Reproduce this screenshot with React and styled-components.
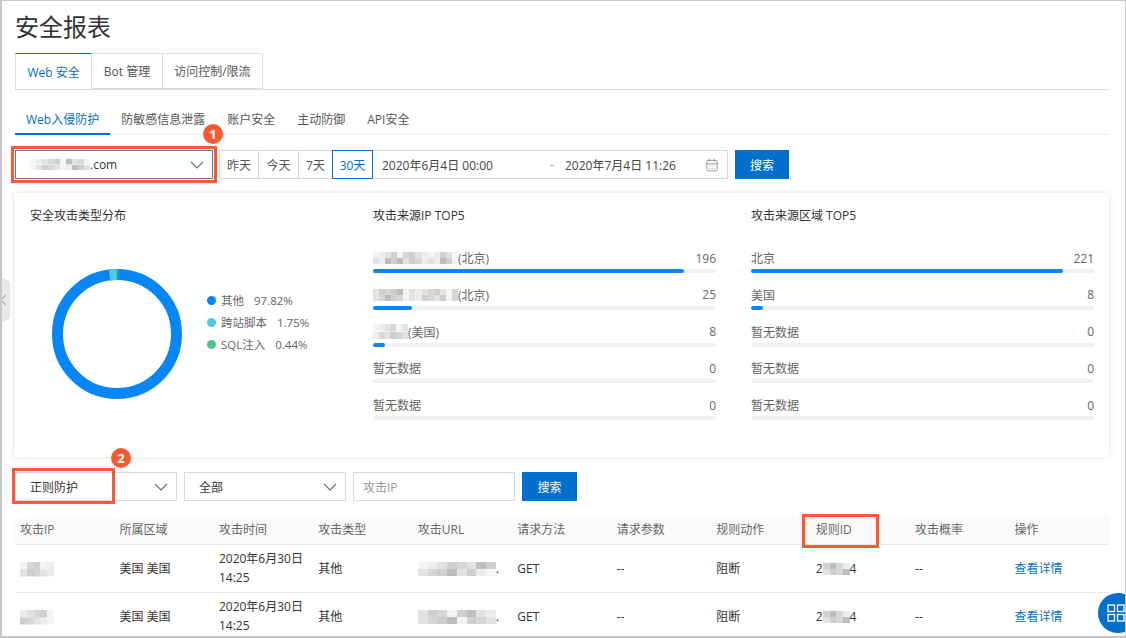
import React from 'react'
import styled, { createGlobalStyle } from 'styled-components'
import { CalendarDays } from 'lucide-react'

const GlobalStyle = createGlobalStyle`
  html, body {
    margin: 0;
    padding: 0;
    background: #ffffff;
  }
  body {
    font-family: "Open Sans", "Noto Sans CJK SC", sans-serif;
    font-size: 12px;
    color: #333333;
  }
  * {
    box-sizing: border-box;
  }
`

const Frame = styled.div`
  position: relative;
  width: 1126px;
  height: 638px;
  overflow: hidden;
  border: 2px solid #c6c6c6;
  border-right-width: 1px;
  border-top-width: 1px;
  padding: 11px 16px 0 13px;
  background: #ffffff;
`

const Title = styled.h1`
  margin: 0;
  height: 30px;
  font-size: 24px;
  line-height: 30px;
  font-weight: 400;
  color: #333333;
`

const TopTabs = styled.div`
  display: flex;
  margin-top: 11px;
  height: 37px;
  border-bottom: 1px solid #dddddd;
`

const TopTab = styled.div`
  height: 36px;
  padding: 0 11.5px;
  display: flex;
  align-items: center;
  border: 1px solid #dddddd;
  border-left-width: ${props => props.$first ? '1px' : '0'};
  border-top: 1px solid ${props => props.$active ? '#0070cc' : '#dddddd'};
  border-bottom: ${props => props.$active ? '0' : '1px solid #dddddd'};
  background: #ffffff;
  color: ${props => props.$active ? '#0070cc' : '#555555'};
`

const SubTabs = styled.div`
  display: flex;
  margin-top: 17px;
  height: 28px;
  border-bottom: 1px solid #ececec;
`

const SubTab = styled.div`
  height: 28px;
  padding: 0 11px;
  line-height: 26px;
  border-bottom: 2px solid ${props => props.$active ? '#0070cc' : 'transparent'};
  color: ${props => props.$active ? '#0070cc' : '#555555'};
`

const FilterRow = styled.div`
  display: flex;
  align-items: stretch;
  height: 29px;
  margin-top: 15px;
`

const SelectBox = styled.div`
  position: relative;
  width: ${props => props.$width}px;
  margin-right: 7px;
  padding: 0 8px 0 14px;
  display: flex;
  align-items: center;
  justify-content: space-between;
  background: #ffffff;
  border: 1px solid ${props => props.$dark ? '#777777' : '#d9d9d9'};
  color: #333333;
`

const Chevron = styled.svg`
  width: 14px;
  height: 8px;
  fill: none;
  stroke: #707070;
  stroke-width: 1.2;
`

const Callout = styled.div`
  position: absolute;
  left: ${props => props.$left}px;
  top: ${props => props.$top}px;
  width: ${props => props.$width}px;
  height: ${props => props.$height}px;
  border: 3px solid #f75a35;
  pointer-events: none;
`

const Badge = styled.div`
  position: absolute;
  left: ${props => props.$left}px;
  top: ${props => props.$top}px;
  width: 20px;
  height: 20px;
  border-radius: 50%;
  background: #f75a35;
  color: #ffffff;
  font-size: 13px;
  font-weight: 700;
  line-height: 20px;
  text-align: center;
`

const QuickGroup = styled.div`
  display: flex;
`

const QuickButton = styled.div`
  width: ${props => props.$width}px;
  margin-left: -1px;
  display: flex;
  align-items: center;
  justify-content: center;
  position: relative;
  z-index: ${props => props.$active ? 1 : 0};
  border: 1px solid ${props => props.$active ? '#0070cc' : '#d9d9d9'};
  color: ${props => props.$active ? '#0070cc' : '#555555'};
`

const DateRange = styled.div`
  width: 356px;
  margin-left: -1px;
  margin-right: 7px;
  padding: 0 8px 0 9px;
  display: flex;
  align-items: center;
  border: 1px solid #d9d9d9;
  color: #444444;
`

const DateText = styled.span`
  width: 168px;
`

const DateDash = styled.span`
  width: 15px;
  color: #999999;
`

const DateEnd = styled.span`
  flex: 1;
`

const SearchButton = styled.button`
  width: ${props => props.$width}px;
  border: 0;
  padding: 0;
  background: #0070cc;
  color: #ffffff;
  font: inherit;
`

const Card = styled.div`
  display: grid;
  grid-template-columns: 343px 343px 343px;
  column-gap: 35px;
  column-gap: 0;
  height: 264px;
  margin-top: 14px;
  padding: 14px 15px 0;
  background: #ffffff;
  box-shadow: 0 0 6px rgba(0, 0, 0, 0.12);
`

const Column = styled.div`
  width: 343px;
  margin-left: ${props => props.$shift || 0}px;
`

const CardTitle = styled.div`
  height: 18px;
  line-height: 18px;
  color: #333333;
`

const DonutWrap = styled.div`
  display: flex;
  align-items: center;
  margin-top: 43px;
  margin-left: 21px;
`

const Legend = styled.div`
  margin-left: 24px;
  margin-top: -24px;
`

const LegendRow = styled.div`
  height: 22px;
  display: flex;
  align-items: center;
  color: #666666;
  font-size: 11.5px;
`

const Dot = styled.span`
  width: 9px;
  height: 9px;
  border-radius: 50%;
  margin-right: 5px;
  background: ${props => props.$color};
`

const LegendValue = styled.span`
  margin-left: 10px;
`

const BarList = styled.div`
  margin-top: 23px;
`

const BarRow = styled.div`
  height: 36.8px;
`

const BarLabel = styled.div`
  height: 20px;
  display: flex;
  align-items: center;
  justify-content: space-between;
  color: #666666;
`

const BarName = styled.span`
  display: flex;
  align-items: center;
`

const Track = styled.div`
  height: 4px;
  margin-top: 1px;
  border-radius: 2px;
  background: #f0f0f0;
`

const Fill = styled.div`
  height: 4px;
  border-radius: 2px;
  background: #0687f5;
  width: ${props => props.$width}px;
`

const Mosaic = styled.span`
  display: inline-block;
  flex: none;
  width: ${props => props.$width}px;
  height: ${props => props.$height || 12}px;
  vertical-align: middle;
  filter: blur(0.4px);
  background-image:
    linear-gradient(90deg, ${props => props.$top}),
    linear-gradient(90deg, ${props => props.$bottom});
  background-size: 100% 50%;
  background-position: 0 0, 0 100%;
  background-repeat: no-repeat;
`

const StyledTable = styled.table`
  width: 1094px;
  margin-top: 14px;
  border-collapse: collapse;
  table-layout: fixed;
`

const HeadCell = styled.th`
  position: relative;
  height: 29px;
  padding: 0 5px;
  background: #fafafa;
  border-bottom: 1px solid #e8e8e8;
  font-weight: 400;
  text-align: left;
  color: #666666;
`

const Cell = styled.td`
  height: 48px;
  padding: 0 5px;
  border-bottom: 1px solid #e8e8e8;
  line-height: 19px;
  color: #333333;
`

const DetailLink = styled.a`
  color: #0070cc;
  text-decoration: none;
`

const SideHandle = styled.div`
  position: absolute;
  left: -2px;
  top: 276px;
  width: 10px;
  height: 46px;
  display: flex;
  align-items: center;
  justify-content: flex-start;
  background: #e8e8e8;
  clip-path: polygon(0 0, 100% 10%, 100% 90%, 0 100%);
`

const FloatButton = styled.div`
  position: absolute;
  left: 1096px;
  top: 592px;
  width: 40px;
  height: 40px;
  padding: 11px 0 0 9px;
  border-radius: 50%;
  background: #0070cc;
`

const grey = ['#f4f4f4', '#e2e2e2', '#cfcfcf', '#bdbdbd', '#ededed', '#d6d6d6']

const mosaicStops = pattern => {
  const step = 100 / pattern.length
  return [...pattern]
    .map((c, i) => `${grey[Number(c)]} ${i * step}% ${(i + 1) * step}%`)
    .join(', ')
}

const Blur = ({ width, height, top, bottom }) => (
  <Mosaic $width={width} $height={height} $top={mosaicStops(top)} $bottom={mosaicStops(bottom)} />
)

const ChevronDown = () => (
  <Chevron viewBox="0 0 14 8">
    <polyline points="1,1 7,7 13,1" />
  </Chevron>
)

const ipRows = [
  { name: <><Blur width={85} top="04120521404210" bottom="14323125414320" />(北京)</>, value: 196, fill: 311 },
  { name: <><Blur width={85} top="12523014152105" bottom="15325014251205" />(北京)</>, value: 25, fill: 39 },
  { name: <><Blur width={35} height={15} top="041501" bottom="451251" />(美国)</>, value: 8, fill: 12 },
  { name: '暂无数据', value: 0, fill: 0 },
  { name: '暂无数据', value: 0, fill: 0 },
]

const regionRows = [
  { name: '北京', value: 221, fill: 312 },
  { name: '美国', value: 8, fill: 12 },
  { name: '暂无数据', value: 0, fill: 0 },
  { name: '暂无数据', value: 0, fill: 0 },
  { name: '暂无数据', value: 0, fill: 0 },
]

const legend = [
  { color: '#0687f5', label: '其他', value: '97.82%' },
  { color: '#4fcbe3', label: '跨站脚本', value: '1.75%' },
  { color: '#4dc48c', label: 'SQL注入', value: '0.44%' },
]

const columns = ['攻击IP', '所属区域', '攻击时间', '攻击类型', '攻击URL', '请求方法', '请求参数', '规则动作', '规则ID', '攻击概率', '操作']

const tableRows = [
  { ip: ['05204', '12514'], url: ['04125132', '15231240'] },
  { ip: ['41520', '25140'], url: ['12502314', '15230251'] },
]

const BarColumn = ({ title, rows, shift }) => (
  <Column $shift={shift}>
    <CardTitle>{title}</CardTitle>
    <BarList>
      {rows.map((row, i) => (
        <BarRow key={i}>
          <BarLabel>
            <BarName>{row.name}</BarName>
            <span>{row.value}</span>
          </BarLabel>
          <Track>
            <Fill $width={row.fill} />
          </Track>
        </BarRow>
      ))}
    </BarList>
  </Column>
)

const Donut = () => (
  <svg width="132" height="132" viewBox="0 0 132 132">
    <circle cx="66" cy="66" r="59.5" fill="none" stroke="#0687f5" strokeWidth="11" />
    <path d="M58.5 7 A59.5 59.5 0 0 1 65 6.5" fill="none" stroke="#4fcbe3" strokeWidth="11" />
    <path d="M65 6.5 A59.5 59.5 0 0 1 66.5 6.5" fill="none" stroke="#4dc48c" strokeWidth="11" />
  </svg>
)

const App = () => (
  <Frame>
    <GlobalStyle />
    <Title>安全报表</Title>
    <TopTabs>
      <TopTab $first $active>Web 安全</TopTab>
      <TopTab>Bot 管理</TopTab>
      <TopTab>访问控制/限流</TopTab>
    </TopTabs>
    <SubTabs>
      <SubTab $active>Web入侵防护</SubTab>
      <SubTab>防敏感信息泄露</SubTab>
      <SubTab>账户安全</SubTab>
      <SubTab>主动防御</SubTab>
      <SubTab>API安全</SubTab>
    </SubTabs>
    <FilterRow>
      <SelectBox $width={198} $dark>
        <BarName><Blur width={60} height={11} top="0415203150" bottom="0125104321" />.com</BarName>
        <ChevronDown />
        <Callout $left={-5} $top={-5} $width={206} $height={37} />
        <Badge $left={187} $top={-27}>1</Badge>
      </SelectBox>
      <QuickGroup>
        <QuickButton $width={40}>昨天</QuickButton>
        <QuickButton $width={41}>今天</QuickButton>
        <QuickButton $width={35}>7天</QuickButton>
        <QuickButton $width={41} $active>30天</QuickButton>
      </QuickGroup>
      <DateRange>
        <DateText>2020年6月4日 00:00</DateText>
        <DateDash>-</DateDash>
        <DateEnd>2020年7月4日 11:26</DateEnd>
        <CalendarDays size={14} color="#888888" strokeWidth={1.4} />
      </DateRange>
      <SearchButton $width={54}>搜索</SearchButton>
    </FilterRow>
    <Card>
      <Column>
        <CardTitle>安全攻击类型分布</CardTitle>
        <DonutWrap>
          <Donut />
          <Legend>
            {legend.map(item => (
              <LegendRow key={item.label}>
                <Dot $color={item.color} />
                {item.label}
                <LegendValue>{item.value}</LegendValue>
              </LegendRow>
            ))}
          </Legend>
        </DonutWrap>
      </Column>
      <BarColumn title="攻击来源IP TOP5" rows={ipRows} />
      <BarColumn title="攻击来源区域 TOP5" rows={regionRows} shift={35} />
    </Card>
    <FilterRow>
      <SelectBox $width={162}>
        正则防护
        <ChevronDown />
        <Callout $left={-4} $top={-5} $width={103} $height={36} />
        <Badge $left={95} $top={-25}>2</Badge>
      </SelectBox>
      <SelectBox $width={162}>
        全部
        <ChevronDown />
      </SelectBox>
      <SelectBox $width={162}>
        <span style={{ color: '#999999', marginLeft: -5 }}>攻击IP</span>
      </SelectBox>
      <SearchButton $width={55}>搜索</SearchButton>
    </FilterRow>
    <StyledTable>
      <thead>
        <tr>
          {columns.map(col => (
            <HeadCell key={col}>
              {col}
              {col === '规则ID' && <Callout $left={-9} $top={-1} $width={77} $height={34} />}
            </HeadCell>
          ))}
        </tr>
      </thead>
      <tbody>
        {tableRows.map((row, i) => (
          <tr key={i}>
            <Cell><Blur width={34} height={15} top={row.ip[0]} bottom={row.ip[1]} /></Cell>
            <Cell>美国 美国</Cell>
            <Cell>2020年6月30日<br />14:25</Cell>
            <Cell>其他</Cell>
            <Cell><Blur width={78} height={14} top={row.url[0]} bottom={row.url[1]} />.</Cell>
            <Cell>GET</Cell>
            <Cell>--</Cell>
            <Cell>阻断</Cell>
            <Cell>2<Blur width={27} height={12} top="2354" bottom="1253" />4</Cell>
            <Cell>--</Cell>
            <Cell><DetailLink href="#">查看详情</DetailLink></Cell>
          </tr>
        ))}
      </tbody>
    </StyledTable>
    <SideHandle>
      <svg width="6" height="12" viewBox="0 0 6 12" fill="none" stroke="#aaaaaa" strokeWidth="1.2">
        <polyline points="6,1 1,6 6,11" />
      </svg>
    </SideHandle>
    <FloatButton>
      <svg width="18" height="18" viewBox="0 0 18 18" fill="none" stroke="#ffffff" strokeWidth="1.3">
        <rect x="1" y="1" width="6.5" height="6.5" />
        <rect x="10.5" y="1" width="6.5" height="6.5" />
        <rect x="1" y="10.5" width="6.5" height="6.5" />
        <rect x="10.5" y="10.5" width="6.5" height="6.5" />
      </svg>
    </FloatButton>
  </Frame>
)

export default App
